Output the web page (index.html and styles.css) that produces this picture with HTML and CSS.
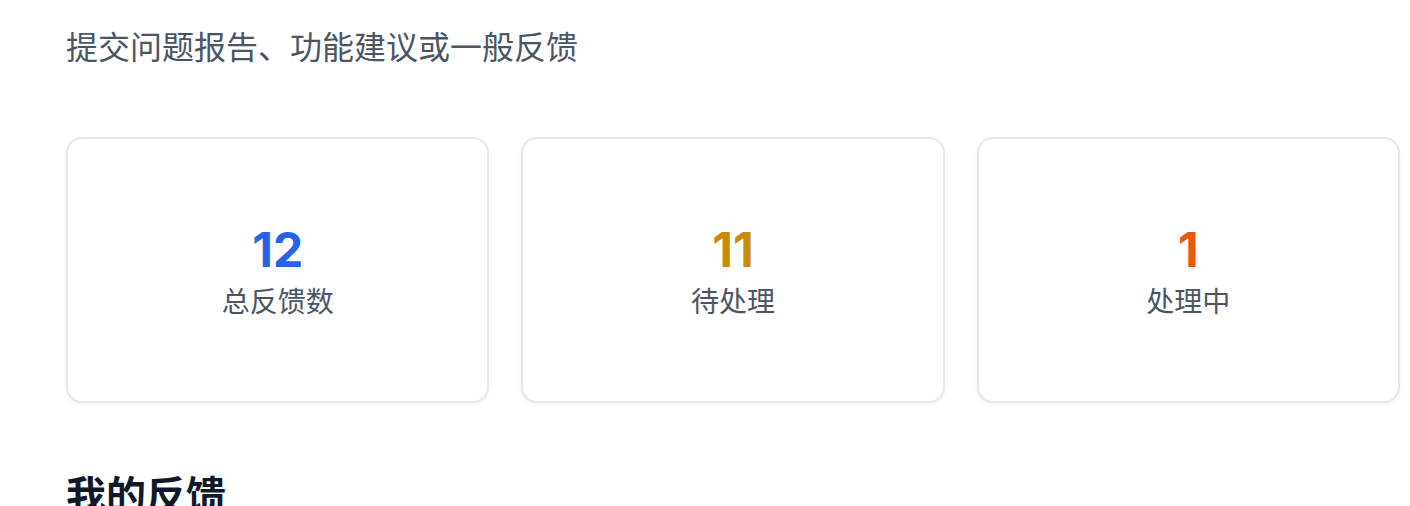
FILE: index.html
```html
<!DOCTYPE html>
<html lang="zh-CN">
<head>
<meta charset="utf-8">
<title>意见反馈</title>
<link rel="stylesheet" href="styles.css">
</head>
<body>
<main class="page">
  <header class="page-head">
    <h1 class="page-title">意见反馈</h1>
    <p class="page-sub">提交问题报告、功能建议或一般反馈</p>
  </header>
  <section class="stats">
    <div class="stat-card">
      <div class="stat-num num-blue">12</div>
      <div class="stat-label">总反馈数</div>
    </div>
    <div class="stat-card">
      <div class="stat-num num-amber">11</div>
      <div class="stat-label">待处理</div>
    </div>
    <div class="stat-card">
      <div class="stat-num num-orange">1</div>
      <div class="stat-label">处理中</div>
    </div>
  </section>
  <h2 class="section-title">我的反馈</h2>
</main>
</body>
</html>
```

FILE: styles.css
```css
html, body {
  margin: 0;
  padding: 0;
  background: #ffffff;
  overflow: hidden;
}
body {
  font-family: Inter, "Noto Sans CJK SC", "Noto Sans", sans-serif;
  color: #111827;
}
.page {
  padding: 0 10px 0 66px;
}
.page-head {
  display: flex;
  flex-direction: column;
}
.page-title {
  margin: -67px 0 19px 0;
  font-size: 60px;
  line-height: 72px;
  font-weight: 700;
  color: #111827;
}
.page-sub {
  margin: 0;
  font-size: 32px;
  line-height: 48px;
  color: #4b5563;
}
.stats {
  display: grid;
  grid-template-columns: repeat(3, 1fr);
  gap: 32px;
  margin-top: 65px;
}
.stat-card {
  display: flex;
  flex-direction: column;
  align-items: center;
  justify-content: center;
  box-sizing: border-box;
  height: 266px;
  background: #ffffff;
  border: 2px solid #e3e7f0;
  border-radius: 16px;
  box-shadow: 0 2px 4px rgba(15, 23, 42, 0.05);
}
.stat-num {
  font-family: Inter, "Noto Sans", sans-serif;
  font-size: 48px;
  line-height: 64px;
  font-weight: 700;
}
.num-blue { color: #2563eb; }
.num-amber { color: #ca8a04; }
.num-orange { color: #ea580c; }
.stat-label {
  font-size: 28px;
  line-height: 40px;
  color: #4b5563;
}
.section-title {
  margin: 65px 0 0 0;
  font-size: 40px;
  line-height: 56px;
  font-weight: 700;
  color: #111827;
}
```
